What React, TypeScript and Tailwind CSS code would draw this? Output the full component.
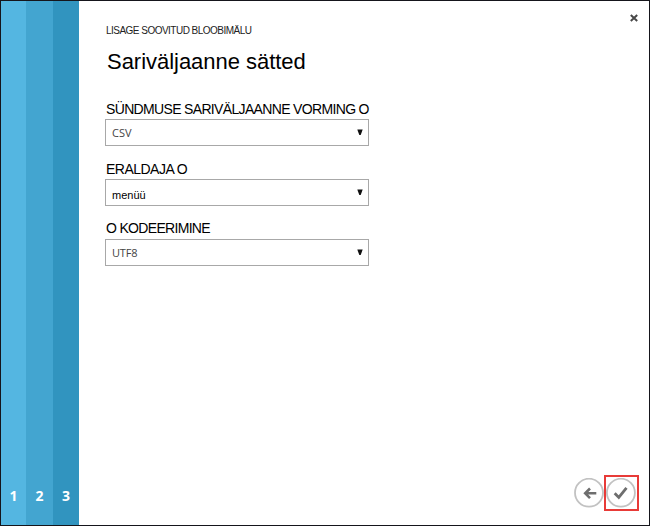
import React from "react";

const arial = "font-['Liberation_Sans',Arial,sans-serif]";
const ui = "font-['Open_Sans','Noto_Sans',sans-serif]";

type FieldProps = { label: string; value: string; labelClass: string; valueClass: string; className: string };

function Field({ label, value, labelClass, valueClass, className }: FieldProps) {
  return (
    <div className={`w-[264px] ${className}`}>
      <div className={`${arial} h-[19px] whitespace-nowrap pl-px text-[14px] leading-[18px] text-black ${labelClass}`}>{label}</div>
      <button className="flex h-[27px] w-full items-center justify-between border border-[#a8a8a8] bg-white pl-[6px] pr-[5px]">
        <span className={valueClass}>{value}</span>
        <svg width="6" height="6" viewBox="0 0 6 6" className="mb-px">
          <path d="M0.3 0.5H5.7L3.7 6H2.3Z" fill="#111" />
        </svg>
      </button>
    </div>
  );
}

export default function App() {
  return (
    <div className="flex h-[526px] w-[650px] overflow-hidden border border-[#15151b] bg-white">
      <nav className={`${ui} flex w-[78px] shrink-0 text-[14px] font-bold leading-5 text-white`}>
        <div className="flex w-[25px] items-end justify-center bg-[#54b6e1] pb-[19px]">1</div>
        <div className="flex w-[27px] items-end justify-center bg-[#43a5d0] pb-[19px]">2</div>
        <div className="flex w-[26px] items-end justify-center bg-[#3194bf] pb-[19px]">3</div>
      </nav>
      <main className="flex grow flex-col">
        <div className="flex justify-between">
          <header className={`${arial} pl-[27px] pt-[24px] text-black`}>
            <div className="h-3 whitespace-nowrap text-[10px] leading-3 tracking-[-0.52px] text-[#222]">LISAGE SOOVITUD BLOOBIMÄLU</div>
            <h1 className="mt-[13px] h-6 whitespace-nowrap pl-px text-[22px] leading-6 tracking-[-0.03px]">Sariväljaanne sätted</h1>
          </header>
          <button aria-label="Close" className="mr-[11px] mt-[13px] h-2 w-2">
            <svg width="8" height="8" viewBox="0 0 8 8">
              <path d="M0.8 1L7.2 7M7.2 1L0.8 7" stroke="#484848" strokeWidth="2" />
            </svg>
          </button>
        </div>
        <section className="flex flex-col pl-[26px]">
          <Field className="mt-[26px]" label="SÜNDMUSE SARIVÄLJAANNE VORMING O" value="CSV" labelClass="tracking-[-0.66px]" valueClass={`${ui} pt-[2px] text-[11px] text-[#444]`} />
          <Field className="mt-[14px]" label="ERALDAJA O" value="menüü" labelClass="tracking-[-0.52px]" valueClass={`${arial} pt-[6px] text-[11px] text-black`} />
          <Field className="mt-[14px]" label="O KODEERIMINE" value="UTF8" labelClass="tracking-[-0.68px] -translate-y-px" valueClass={`${ui} pt-[2px] text-[11px] tracking-[-0.2px] text-[#444]`} />
        </section>
        <footer className="mb-[14px] mr-[10px] mt-auto flex items-center justify-end">
          <button aria-label="Back" className="h-[30px] w-[30px]">
            <svg width="30" height="30" viewBox="0 0 30 30" fill="none">
              <circle cx="15" cy="14.7" r="14" stroke="#c2c2c2" strokeWidth="1.8" />
              <path d="M22.3 15.3H11M16 10.5L11.2 15.3L16 20.1" stroke="#6e6e6e" strokeWidth="2.6" />
            </svg>
          </button>
          <button aria-label="Finish" className="flex h-[36px] w-[35px] items-center border-2 border-[#e83b38]">
            <svg width="30" height="30" viewBox="0 0 30 30" fill="none" className="shrink-0">
              <circle cx="14.9" cy="14.7" r="14" stroke="#c2c2c2" strokeWidth="1.8" />
              <path d="M8.7 15.2L12.8 19.4L20.5 9.8" stroke="#6e6e6e" strokeWidth="2.8" />
            </svg>
          </button>
        </footer>
      </main>
    </div>
  );
}
